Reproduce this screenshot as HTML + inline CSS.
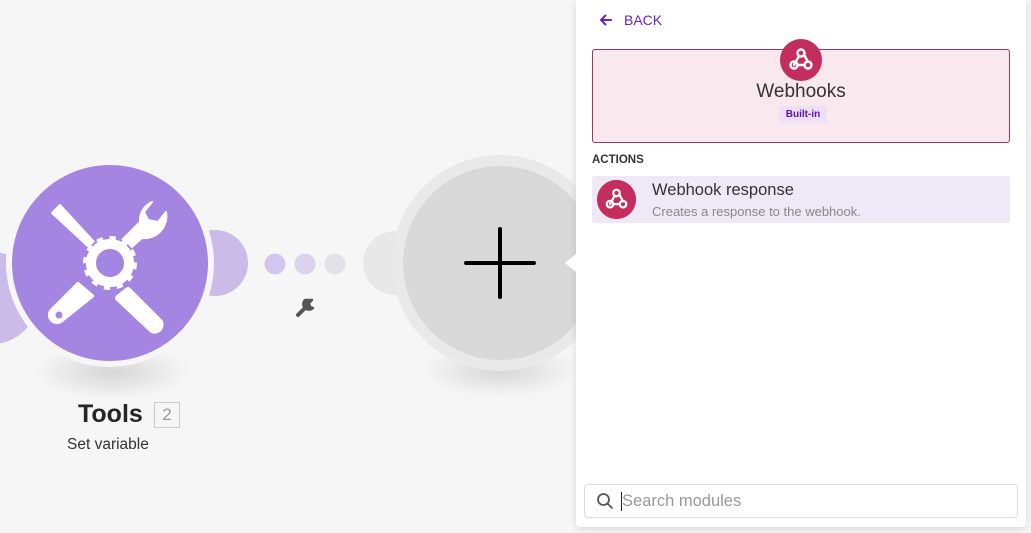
<!DOCTYPE html>
<html><head><meta charset="utf-8"><style>
*{margin:0;padding:0;box-sizing:border-box}
body{width:1031px;height:533px;background:#f6f6f6;position:relative;overflow:hidden;font-family:"Liberation Sans",sans-serif}
.abs{position:absolute}
</style></head><body>
<svg class="abs" style="left:0;top:0" width="600" height="533">
<defs>
<radialGradient id="sh" cx="50%" cy="50%" r="50%"><stop offset="0" stop-color="#000" stop-opacity=".13"/><stop offset="1" stop-color="#000" stop-opacity="0"/></radialGradient>
</defs>
<ellipse cx="112" cy="372" rx="78" ry="28" fill="url(#sh)"/>
<ellipse cx="500" cy="370" rx="78" ry="28" fill="url(#sh)"/>
<circle cx="-8" cy="298" r="46" fill="#cbbbe9"/>
<circle cx="215" cy="263" r="33" fill="#cbbbe9"/>
<circle cx="110" cy="263" r="104" fill="#f6f6f6"/>
<circle cx="110" cy="263" r="98" fill="#a486e2"/>
<circle cx="275" cy="264" r="10.5" fill="#d3c6ef"/>
<circle cx="305" cy="264" r="10.5" fill="#dbd3ee"/>
<circle cx="335" cy="264" r="10.5" fill="#e4e2e9"/>
<g fill="#fff" stroke="#fff">
<path d="M52 213 L60 205 L96 244 L91 249 Z" stroke-width="2" stroke-linejoin="round"/>
<path d="M78 284 L52 310 a7 7 0 0 0 10 10 L92 296 Z" stroke-width="4" stroke-linejoin="round"/>
<path d="M128 290 L160 322 a6 6 0 0 1 -8 8 L118 298 Z" stroke-width="6" stroke-linejoin="round"/>
<path d="M122 240 L140 222 a20 20 0 0 1 12 -20 l-8 10 l4 8 l10 2 l8 -10 a22 22 0 0 1 -24 26 l-16 14 Z" stroke-width="2" stroke-linejoin="round"/>
</g>
<circle cx="59" cy="315" r="3.5" fill="#a486e2"/>
<circle cx="110" cy="263" r="19" fill="none" stroke="#a486e2" stroke-width="14"/>
<circle cx="110" cy="263" r="19" fill="none" stroke="#fff" stroke-width="10"/>
<circle cx="110" cy="263" r="24" fill="none" stroke="#fff" stroke-width="6" stroke-dasharray="6 6.5"/>
<path d="M298 315 L307 306" stroke="#555" stroke-width="4" stroke-linecap="round"/>
<path d="M305 300 a5.5 5.5 0 0 0 8 8 l-3 -1 l-1 -4 l3 -3 Z" fill="#555" stroke="#555" stroke-width="2.5" stroke-linejoin="round"/>
<circle cx="395" cy="263" r="32" fill="#e8e8e8"/>
<circle cx="500" cy="263" r="108" fill="#e9e9e9"/>
<circle cx="500" cy="263" r="97" fill="#d9d9d9"/>
<path d="M466 263 H534 M500 229 V297" stroke="#000" stroke-width="4" stroke-linecap="round"/>
</svg>
<div class="abs" style="left:576px;top:0;width:450px;height:527px;background:#fff;box-shadow:0 2px 8px rgba(0,0,0,.12);border-radius:0 0 4px 4px"></div>
<div class="abs" style="left:565px;top:254px;width:0;height:0;border-top:9px solid transparent;border-bottom:9px solid transparent;border-right:11px solid #fff"></div>
<svg class="abs" style="left:598px;top:13px" width="16" height="14"><path d="M13 7 H3 M7.5 2.5 L3 7 L7.5 11.5" fill="none" stroke="#6a20c0" stroke-width="2" stroke-linecap="round" stroke-linejoin="round"/></svg>
<div class="abs" style="left:624px;top:12px;color:#6a20c0;font-size:14px;">BACK</div>
<div class="abs" style="left:592px;top:49px;width:418px;height:94px;background:#f9e8ee;border:1px solid #a2355c;border-radius:3px"></div>
<svg class="abs" style="left:779px;top:38px" width="44" height="44" viewBox="0 0 44 44">
<circle cx="22" cy="22" r="21" fill="#c32e5e"/>
<g fill="none" stroke="#fff" stroke-width="2.4" stroke-linecap="round">
<circle cx="22" cy="15" r="3.5"/><circle cx="15" cy="27" r="3.5"/><circle cx="29" cy="27" r="3.5"/>
<path d="M20 18 L15 27 M25 16.5 L29 24 M18.5 27 H25.5"/>
</g></svg>
<div class="abs" style="left:592px;top:81px;width:418px;text-align:center;font-size:19px;color:#333">Webhooks</div>
<div class="abs" style="left:779px;top:106px;width:48px;height:17px;background:#ede0f6;border-radius:3px;color:#5a12a8;font-size:10px;font-weight:bold;text-align:center;line-height:17px">Built-in</div>
<div class="abs" style="left:592px;top:154px;font-size:11.5px;font-weight:bold;color:#333">ACTIONS</div>
<div class="abs" style="left:592px;top:176px;width:418px;height:47px;background:#efe8f6;border-radius:3px"></div>
<svg class="abs" style="left:596px;top:179px" width="41" height="41" viewBox="0 0 44 44">
<circle cx="22" cy="22" r="21" fill="#c32e5e"/>
<g fill="none" stroke="#fff" stroke-width="2.4" stroke-linecap="round">
<circle cx="22" cy="15" r="3.5"/><circle cx="15" cy="27" r="3.5"/><circle cx="29" cy="27" r="3.5"/>
<path d="M20 18 L15 27 M25 16.5 L29 24 M18.5 27 H25.5"/>
</g></svg>
<div class="abs" style="left:652px;top:181px;font-size:16.5px;color:#333">Webhook response</div>
<div class="abs" style="left:652px;top:204px;font-size:13px;color:#888">Creates a response to the webhook.</div>
<div class="abs" style="left:584px;top:484px;width:434px;height:34px;border:1px solid #ddd;border-radius:4px;background:#fff"></div>
<svg class="abs" style="left:596px;top:492px" width="18" height="18"><circle cx="7.5" cy="7.5" r="5.5" fill="none" stroke="#555" stroke-width="1.8"/><path d="M11.5 11.5 L16 16" stroke="#555" stroke-width="1.8" stroke-linecap="round"/></svg>
<div class="abs" style="left:621px;top:492px;width:1px;height:19px;background:#222"></div>
<div class="abs" style="left:622px;top:492px;font-size:16.5px;color:#999">Search modules</div>
<div class="abs" style="left:78px;top:400px;font-size:25px;font-weight:bold;color:#262626">Tools</div>
<div class="abs" style="left:154px;top:402px;width:26px;height:26px;border:1.5px solid #ccc;color:#999;font-size:17px;text-align:center;line-height:23px">2</div>
<div class="abs" style="left:67px;top:436px;font-size:15.5px;color:#333">Set variable</div>
</body></html>
